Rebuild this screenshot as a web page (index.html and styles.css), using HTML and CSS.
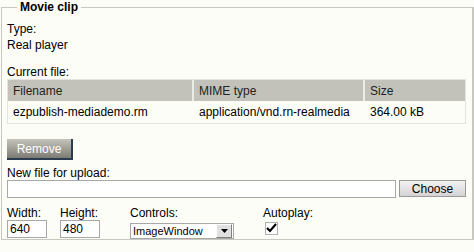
FILE: index.html
```html
<!DOCTYPE html>
<html>
<head>
<meta charset="utf-8">
<link rel="stylesheet" href="styles.css">
</head>
<body>
<fieldset class="box">
  <legend class="legend">Movie clip</legend>
  <div class="line first">Type:</div>
  <div class="line">Real player</div>
  <div class="line gap">Current file:</div>
  <table class="files">
    <thead>
      <tr><th class="c1">Filename</th><th class="c2">MIME type</th><th class="c3">Size</th></tr>
    </thead>
    <tbody>
      <tr><td>ezpublish-mediademo.rm</td><td>application/vnd.rn-realmedia</td><td>364.00&nbsp;kB</td></tr>
    </tbody>
  </table>
  <div class="btnrow"><button class="remove">Remove</button></div>
  <div class="line upl">New file for upload:</div>
  <div class="uploadrow">
    <input class="filebox" type="text">
    <button class="choose">Choose</button>
  </div>
  <div class="props">
    <div class="prop w1">
      <div class="line">Width:</div>
      <input class="num" type="text" value="640">
    </div>
    <div class="prop w2">
      <div class="line">Height:</div>
      <input class="num" type="text" value="480">
    </div>
    <div class="prop w3">
      <div class="line">Controls:</div>
      <div class="select"><span class="selval">ImageWindow</span><span class="arrow"><svg width="9" height="5" viewBox="0 0 9 5"><path d="M1 0h7l-3.5 4z" fill="#000"/></svg></span></div>
    </div>
    <div class="prop">
      <div class="line">Autoplay:</div>
      <div class="check"><svg width="13" height="13" viewBox="0 0 13 13"><path d="M2 6l3 3 6-7" fill="none" stroke="#000" stroke-width="2.2"/></svg></div>
    </div>
  </div>
</fieldset>
</body>
</html>
```
FILE: styles.css
```css
html, body {
  margin: 0;
  padding: 0;
  background: #fdfdf8;
}
body {
  font-family: "Liberation Sans", Arial, sans-serif;
  font-size: 12px;
  color: #000;
  width: 474px;
  height: 252px;
  overflow: hidden;
}
.box {
  margin: 0 0 0 1px;
  border: 1px solid #c8c8c0;
  border-right-width: 2px;
  padding: 0 6px 8px 5px;
  height: 230px;
}
.legend {
  font-weight: bold;
  line-height: 14px;
  margin-left: 10px;
  padding: 0 3px;
}
.line {
  line-height: 14px;
  height: 14px;
  margin-top: 2px;
}
.line.first { margin-top: 8px; }
.line.gap { margin-top: 13px; }
.line.upl { margin-top: 5px; }
.files {
  width: 100%;
  border-collapse: separate;
  border-spacing: 0;
  border: 1px solid #e4e4dc;
  margin-top: 0;
  background: #fdfdf8;
}
.files th {
  background: #c2c2ba;
  font-weight: normal;
  text-align: left;
  color: #222;
  height: 21px;
  padding: 0 5px;
  border-right: 2px solid #ececE4;
}
.files th.c3 { border-right: none; }
.files td {
  height: 22px;
  padding: 0 5px;
}
.c1 { width: 174px; }
.c2 { width: 159px; }
.btnrow {
  margin-top: 15px;
  height: 22px;
}
.remove {
  font-family: "Liberation Sans", Arial, sans-serif;
  font-size: 12px;
  color: #fff;
  width: 66px;
  height: 21px;
  padding: 0;
  border: none;
  border-right: 2px solid #2c3c50;
  border-bottom: 2px solid #2c3c50;
  background: linear-gradient(#c4c4bc, #7c7c74);
}
.uploadrow {
  display: flex;
  gap: 3px;
  margin-top: 0;
  height: 18px;
}
.filebox {
  width: 389px;
  height: 18px;
  box-sizing: border-box;
  border: 1px solid #a8a8a8;
  background: #fff;
  padding: 0 2px;
  margin: 0;
}
.choose {
  font-family: "Liberation Sans", Arial, sans-serif;
  font-size: 12px;
  width: 67px;
  height: 17px;
  padding: 0;
  border: 1px solid #9a9a9a;
  background: linear-gradient(#f2f2f2, #d4d4d4);
  color: #000;
}
.props {
  display: flex;
  margin-top: 8px;
}
.props .line { margin-top: 0; }
.prop.w1 { width: 53px; }
.prop.w2 { width: 70px; }
.prop.w3 { width: 133px; }
.num {
  box-sizing: border-box;
  width: 40px;
  height: 18px;
  margin: 0;
  border: 1px solid #a8a8a8;
  background: #fff;
  padding: 0 2px;
  font-family: "Liberation Sans", Arial, sans-serif;
  font-size: 12px;
}
.select {
  box-sizing: border-box;
  width: 104px;
  height: 16px;
  margin-top: 3px;
  border: 1px solid #a8a8a8;
  background: #fff;
  display: flex;
  align-items: center;
  justify-content: space-between;
  padding-left: 2px;
  font-size: 11px;
}
.arrow {
  width: 14px;
  height: 12px;
  margin-right: 1px;
  background: #e0e0e0;
  border: 1px solid #fff;
  border-right-color: #808080;
  border-bottom-color: #808080;
  display: flex;
  align-items: center;
  justify-content: center;
}
.check {
  width: 13px;
  height: 13px;
  margin-top: 2px;
  margin-left: 2px;
  background: #fff;
  border: 1px solid #b0b0b0;
  box-sizing: border-box;
  display: flex;
}
.check svg { margin: -1px; }
```
